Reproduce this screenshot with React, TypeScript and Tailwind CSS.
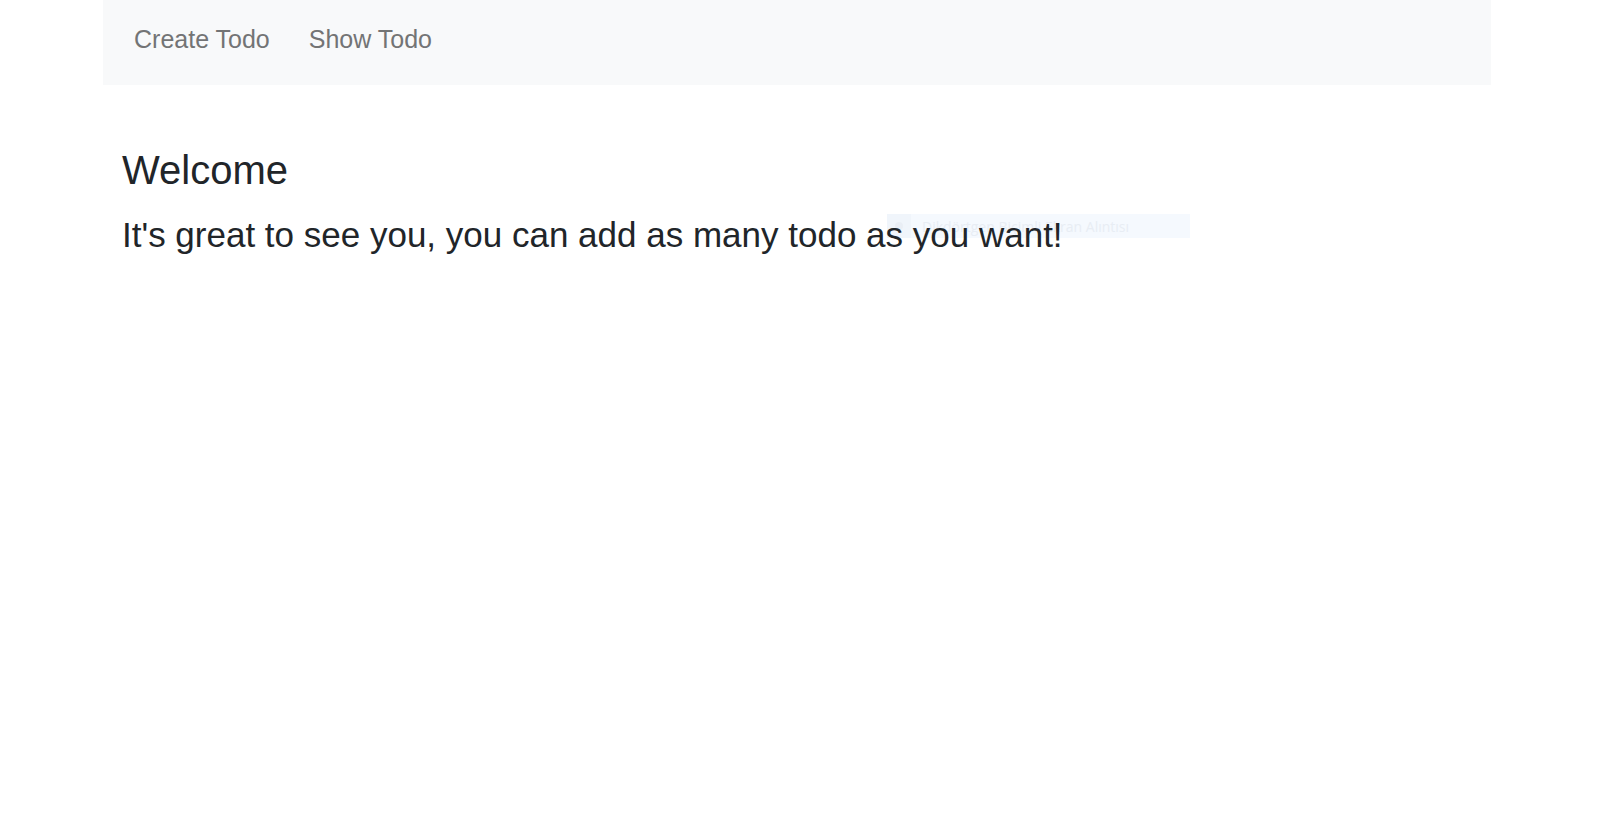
import React from "react";

export default function App() {
  return (
    <div className="min-h-[836px] bg-white" style={{ fontFamily: '"Liberation Sans", Arial, sans-serif' }}>
      <nav className="ml-[103px] w-[1388px] h-[85px] bg-[#f8f9fa] flex items-start pt-[21px] pl-[31px] gap-[39px]">
        <a className="text-[25px] leading-[37px] text-[#737475] cursor-pointer">Create Todo</a>
        <a className="text-[25px] leading-[37px] text-[#737475] cursor-pointer">Show Todo</a>
      </nav>
      <main className="relative pl-[122px] pt-[61px] text-[#212529]">
        <div className="absolute left-[887px] top-[129px] w-[303px] h-[24px] flex items-center bg-[#f5f9fe]">
          <div className="w-[24px] h-[24px] bg-[#f0f5fb] flex items-center justify-center">
            <div className="w-[8px] h-[8px] rounded-full bg-[#e9eef5]" />
          </div>
          <span
            className="ml-[11px] text-[14px] text-[#e8edf4]"
            style={{ fontFamily: '"Open Sans", "Noto Sans", sans-serif' }}
          >
            Dikdörtgen Biçimli Ekran Alıntısı
          </span>
        </div>
        <h1 className="relative text-[40px] leading-[48px] font-normal">Welcome</h1>
        <h2 className="relative mt-[19px] text-[35px] leading-[43px] font-normal">
          It's great to see you, you can add as many todo as you want!
        </h2>
      </main>
    </div>
  );
}
